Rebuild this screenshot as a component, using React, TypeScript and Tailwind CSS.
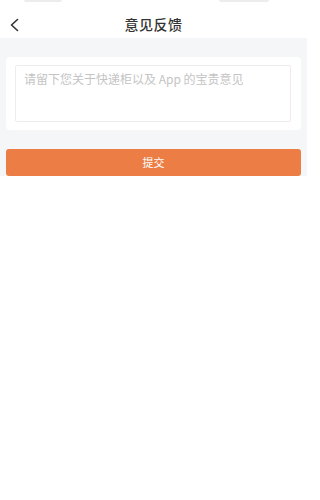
import React from 'react'

export default function App() {
  return (
    <div
      className="w-[307px] h-[500px] bg-white flex flex-col"
      style={{ fontFamily: '"Noto Sans CJK SC", "Liberation Sans", sans-serif' }}
    >
      {/* cropped status bar remnants */}
      <div className="flex justify-between px-[24px] h-[3px]">
        <div className="w-[38px] h-[2px] bg-[#ececec] rounded-b" />
        <div className="w-[50px] h-[2px] bg-[#ececec] rounded-b mr-[14px]" />
      </div>

      {/* header */}
      <div className="relative flex items-center justify-center h-[35px] pt-[7px]">
        <button className="absolute left-[9px] top-[15px] text-[#333]">
          <svg width="12" height="14" viewBox="0 0 12 14" fill="none">
            <path d="M8.5 1.5 L2.5 7 L8.5 12.5" stroke="#333" strokeWidth="1.6" strokeLinecap="round" strokeLinejoin="round" />
          </svg>
        </button>
        <h1 className="text-[14px] font-medium text-[#333] tracking-[0.5px]">意见反馈</h1>
      </div>

      {/* content */}
      <div className="bg-[#f5f6f8] px-[6px] pt-[19px]">
        <div className="bg-white rounded-[4px] pl-[9px] pr-[10px] py-[8px]">
          <textarea
            className="block w-full h-[57px] resize-none border border-[#ededed] rounded-[2px] px-[8px] pt-[4px] text-[12px] text-[#333] placeholder:text-[#c4c4c4] outline-none"
            placeholder="请留下您关于快递柜以及 App 的宝贵意见"
          />
        </div>
        <button className="mt-[19px] w-full h-[27px] rounded-[3px] bg-[#ec7e45] text-white text-[11px] flex items-center justify-center">
          提交
        </button>
      </div>
    </div>
  )
}
